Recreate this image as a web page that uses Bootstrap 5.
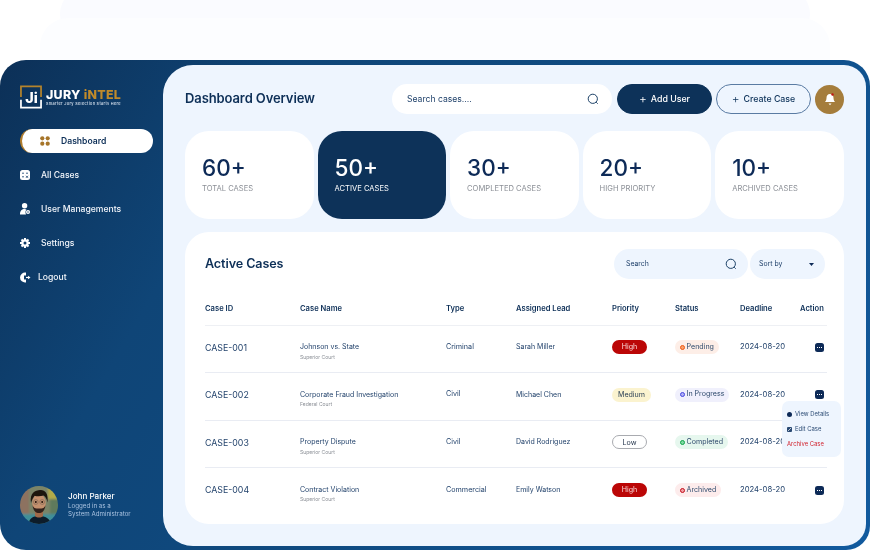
<!DOCTYPE html>
<html lang="en">
<head>
<meta charset="utf-8">
<title>Jury Intel Dashboard</title>
<link href="https://cdn.jsdelivr.net/npm/bootstrap@5.3.0/dist/css/bootstrap.min.css" rel="stylesheet">
<style>
html,body{margin:0;width:870px;height:550px;overflow:hidden;background:#fff}
body{font-family:Inter,"Liberation Sans",sans-serif;color:#0d2f57;position:relative}
.ghost-a,.ghost-b{position:absolute}
.ghost-a{left:60px;right:60px;top:-12px;height:52px;border-radius:30px;background:#fafbff}
.ghost-b{left:40px;right:40px;top:18px;height:42px;border-radius:28px 28px 0 0;background:#fcfdff}
.stage{position:relative;padding-top:60px;height:550px;will-change:transform}
.frame{height:490px;border-radius:26px 26px 24px 26px;background:linear-gradient(120deg,#0c3057 0,#0f4577 25%,#0f4a80 50%,#115a9e 100%);padding:5px 4px 4px 0}
.rail{width:163px;padding:20px 10px 22px 20px}
.panel{background:#eef5fe;border-radius:30px 22px 22px 30px;padding:19px 22px 22px 22px;min-width:0}
.logo-t{font-weight:800;font-size:12.4px;line-height:13px;letter-spacing:.3px;color:#fff;white-space:nowrap}
.logo-t span{color:#c08a2a}
.logo-s{font-size:3.8px;line-height:5px;color:#dfe8f3;letter-spacing:.35px;white-space:nowrap;font-weight:500}
.navrail{margin-top:20px;gap:10px}
.navrail .nav-link{height:24px;padding:0;display:flex;align-items:center;color:#f3f6fb;font-size:8.6px;font-weight:500}
.navrail .nav-link svg{flex:none}
.navrail .nav-link.on{background:#fff;color:#0d2f57;border-radius:12px;border-left:2px solid #b07d2e;padding-left:18px;gap:11px;font-weight:600}
.navrail .nav-link.it{padding-left:0;gap:7px}
.who{margin-top:auto;gap:10px}
.who-t{margin-bottom:2px}
.who-n{font-size:8.1px;font-weight:500;color:#fff;line-height:12px}
.who-r{font-size:6.2px;line-height:8.5px;color:#a9c2e0}
.page-h{font-size:13px;font-weight:600;color:#0d2f57;margin:0;letter-spacing:-.1px}
.topbar{height:30px;margin-bottom:17px}
.sbox{width:220px;height:30px;margin-left:auto;margin-right:5px;background:#fff;border-radius:15px;padding:0 13px 0 15px;font-size:8.6px;color:#22436c}
.cta{width:95px;height:30px;border-radius:15px;font-size:8.8px;padding:0;font-weight:500;display:flex;align-items:center;justify-content:center;gap:4px}
.cta span{font-size:12px;font-weight:300;line-height:1}
.cta-a{background:#0d3259;color:#fff;border:1px solid #0d3259;margin-right:4px}
.cta-b{background:transparent;color:#0d3259;border:1px solid #5a7ba3;margin-right:4px}
.belly{width:29px;height:29px;border-radius:50%;background:#a57d3c;flex:none}
.stats{display:grid;grid-template-columns:repeat(5,1fr);gap:3.7px;margin-bottom:13px}
.stat{height:88px;border-radius:24px;background:#fff;padding:24px 17px 0}
.stat b{display:block;font-weight:500;font-size:22.5px;line-height:26px;color:#0d2a57}
.stat i{display:block;font-style:normal;font-size:7.6px;line-height:10px;margin-top:3px;color:#8b8f96}
.stat.dark{background:#0d3259}
.stat.dark b,.stat.dark i{color:#fff}
.board{height:292px;background:#fff;border-radius:24px;padding:20px 17px 0 20px;position:relative}
.board .page-h{font-size:12.6px}
.mini{height:30px;border-radius:15px;background:#eef5fe;font-size:6.9px;color:#22436c;display:flex;align-items:center;justify-content:space-between}
.mini-s{width:134px;margin-left:auto;margin-right:2px;padding:0 11px 0 12px}
.mini-d{width:75px;padding:0 11px 0 9px;margin-right:2px}
.bh-row{height:30px;margin-top:-3px}
.grid-t{table-layout:fixed;width:622px;margin:0;border-collapse:collapse}
.grid-t>*>tr>*{padding:0;background:transparent;color:#0d2f57;vertical-align:middle;box-shadow:none}
.grid-t>thead>tr>th{height:38px;padding-top:6px;font-size:7.6px;font-weight:600;border-bottom:1px solid #eef0f4}
.grid-t>tbody>tr>td{height:47.5px;padding-bottom:3px;font-size:7.2px;color:#23436c;border-bottom:1px solid #e9ecf3}
.grid-t>tbody>tr:last-child>td{border-bottom:0}
.grid-t>tbody>tr>td.nmc{padding-top:8px;font-size:7px}
.grid-t>tbody>tr>td.ld{font-size:7px}
.c1{width:95px}.c2{width:146px}.c3{width:70px}.c4{width:96px}.c5{width:63px}.c6{width:65px}.c7{width:60px}.c8{width:27px}
.grid-t>tbody>tr>td.cid{font-size:8.8px}
.sub{display:block;font-size:5px;line-height:7px;color:#8b8f96;margin-top:1.5px}
.nm{display:block;line-height:10px;margin-top:0}
.prio{display:inline-block;height:14px;line-height:13px;border-radius:7px;text-align:center;font-size:7.1px;width:35px}
.p-h{background:#bb0606;color:#fbdada}
.p-m{background:#fbf3cf;color:#2a3f55;width:39px}
.p-l{background:#fff;border:1px solid #a9abb0;color:#26364d}
.stt{display:inline-flex;align-items:center;gap:1.5px;height:14px;border-radius:7px;padding:0 5px;font-size:7.1px;color:#2e4a6c}
.stt u{display:block;width:5px;height:5px;border-radius:50%;text-decoration:none;border:1.6px solid}
.s-p{background:#fdeee7}.s-p u{border-color:#f05a10;background:#f7a070}
.s-i{background:#f0f0fc}.s-i u{border-color:#4545e0;background:#b0b0f5}
.s-c{background:#e6f7ee}.s-c u{border-color:#0ea54a;background:#7ed8a0}
.s-a{background:#fdecec}.s-a u{border-color:#c40d1a;background:#f0a0a5}
.grid-t>tbody>tr>td.dl{font-size:7.7px}
.dots{display:block;width:9px;height:9px;margin-left:15px;border-radius:2.5px;background:#0d2a57;position:relative}
.dots::after{content:"";position:absolute;left:2px;top:4px;width:1px;height:1px;background:#fff;box-shadow:2px 0 #fff,4px 0 #fff}
.drop{position:absolute;left:597px;top:169px;width:59px;height:56px;border-radius:7px;background:#eef5fe;padding:6px 0 0 5px;font-size:5.9px;color:#2a4a73;z-index:2}
.drop div{height:15px;display:flex;align-items:center;gap:3px}
.drop .red{color:#d11f2a}
</style>
</head>
<body>
<div class="ghost-a"></div><div class="ghost-b"></div>
<div class="stage">
<div class="frame d-flex">
  <aside class="rail d-flex flex-column flex-shrink-0">
    <div class="d-flex align-items-center gap-1">
      <svg width="22" height="24" viewBox="0 0 23 24" aria-hidden="true">
        <path d="M1 12V1h21v11" fill="none" stroke="#b5842c" stroke-width="1.8"/>
        <path d="M1 15v8h21v-8" fill="none" stroke="#fff" stroke-width="1.8"/>
        <text x="5.500" y="18" font-family="Inter,sans-serif" font-size="15" font-weight="800" fill="#fff">Ji</text>
      </svg>
      <div>
        <div class="logo-t">JURY <span>iNTEL</span></div>
        <div class="logo-s">Smarter Jury Selection Starts Here</div>
      </div>
    </div>
    <nav class="nav flex-column navrail">
      <a class="nav-link on" href="#"><svg width="10" height="10" viewBox="0 0 10 10" fill="#a6752a"><circle cx="2.300" cy="2.300" r="2.100"/><circle cx="7.700" cy="2.300" r="2.100"/><circle cx="2.300" cy="7.700" r="2.100"/><circle cx="7.700" cy="7.700" r="2.100"/></svg>Dashboard</a>
      <a class="nav-link it" href="#"><svg width="10" height="10" viewBox="0 0 10 10"><rect width="10" height="10" rx="2.500" fill="#fff"/><path d="M2 3.200h2M6 3.200h2M2 6.800h2M6 5.800l2 2M8 5.800l-2 2" stroke="#0e3a68" stroke-width=".8"/></svg><span class="ms-1">All Cases</span></a>
      <a class="nav-link it" href="#"><svg width="10" height="12" viewBox="0 0 10 12" fill="#fff"><circle cx="4.600" cy="2.800" r="2.700"/><path d="M0 11.500c0-4 2-5.500 4.500-5.500 1 0 1.500.2 2 .5C5.500 7.500 5 9.500 6 11.500z"/><circle cx="8" cy="9" r="2"/><circle cx="8" cy="9" r=".7" fill="#0e3a68"/></svg><span class="ms-1">User Managements</span></a>
      <a class="nav-link it" href="#"><svg width="10" height="10" viewBox="0 0 10 10"><circle cx="5" cy="5" r="3.700" fill="#fff"/><g stroke="#fff" stroke-width="2"><path d="M5 0v10M0 5h10M1.500 1.500l7 7M8.500 1.500l-7 7"/></g><circle cx="5" cy="5" r="1.500" fill="#0e3a68"/></svg><span class="ms-1">Settings</span></a>
      <a class="nav-link it" href="#"><svg width="11" height="11" viewBox="0 0 11 11" fill="#fff"><path d="M6 .6A5 5 0 1 0 6 10.400V7.500H4V3.500h2z"/><path d="M8 3.700l2.500 1.800L8 7.300z"/><path d="M6 4.900h2.500v1.200H6z"/></svg><span class="ms-0">Logout</span></a>
    </nav>
    <div class="who d-flex align-items-center">
      <svg width="38" height="38" viewBox="0 0 38 38" class="flex-shrink-0" aria-hidden="true">
        <defs>
          <clipPath id="av"><circle cx="19" cy="19" r="19"/></clipPath>
          <filter id="sf" x="-10%" y="-10%" width="120%" height="120%"><feGaussianBlur stdDeviation="1.100"/></filter>
          <filter id="sg" x="-10%" y="-10%" width="120%" height="120%"><feGaussianBlur stdDeviation=".45"/></filter>
        </defs>
        <g clip-path="url(#av)">
          <g filter="url(#sf)">
            <rect x="-3" y="-3" width="44" height="44" fill="#7a8468"/>
            <rect x="-3" y="-3" width="12" height="44" fill="#8d7260"/>
            <rect x="28" y="-3" width="13" height="16" fill="#b3ab4a"/>
            <rect x="30" y="13" width="11" height="15" fill="#5f7a5c"/>
            <rect x="-3" y="28" width="44" height="13" fill="#3f8f98"/>
          </g>
          <g filter="url(#sg)">
            <path d="M8 40c1-8 5-10 11-10s11 2 13 10z" fill="#0f1a2a"/>
            <path d="M15 24h8v6c-2 2-6 2-8 0z" fill="#a26b49"/>
            <ellipse cx="19" cy="17" rx="6.800" ry="9" fill="#c4916e"/>
            <path d="M12.500 19c.6 6 3.500 8 6.500 8s5.900-2 6.500-8c-1 3-2.500 3.500-6.500 3.500s-5.500-.5-6.500-3.500z" fill="#33211a"/>
            <path d="M11 17C9.500 7 15 4 20.500 4c5 0 8 4 7 12.500-.8-4-2-6-4-7-3 1-6.500 1-9 .2-1 1.500-2.500 3.300-3.500 7.300z" fill="#1b1310"/>
            <circle cx="15.800" cy="16" r="1" fill="#21140e"/><circle cx="22.200" cy="16" r="1" fill="#21140e"/>
          </g>
          <g fill="none" stroke="#6b5a50" stroke-width=".5"><circle cx="15.800" cy="16" r="2.400"/><circle cx="22.200" cy="16" r="2.400"/></g>
        </g>
      </svg>
      <div class="who-t">
        <div class="who-n">John Parker</div>
        <div class="who-r">Logged in as a<br>System Administrator</div>
      </div>
    </div>
  </aside>
  <main class="panel flex-grow-1">
    <header class="topbar d-flex align-items-center">
      <h1 class="page-h">Dashboard Overview</h1>
      <div class="sbox d-flex align-items-center justify-content-between"><span>Search cases....</span>
        <svg width="12" height="12" viewBox="0 0 12 12" fill="none" stroke="#1d4268" stroke-width="1"><circle cx="5.800" cy="5.800" r="4.600"/><path d="M9.200 9.200l1.500 1.500"/></svg></div>
      <button class="btn cta cta-a" type="button"><span>+</span> Add User</button>
      <button class="btn cta cta-b" type="button"><span>+</span> Create Case</button>
      <div class="belly d-flex align-items-center justify-content-center">
        <svg width="12" height="13" viewBox="0 0 12 13"><path d="M6 1c2.500 0 3.500 2 3.500 4 0 2 .8 3 1.500 4H1c.7-1 1.500-2 1.500-4C2.500 3 3.500 1 6 1z" fill="#fff"/><path d="M4.500 10.500h3L6 12.300z" fill="#fff"/><circle cx="8.500" cy="1.500" r="1.200" fill="#c21414"/></svg>
      </div>
    </header>
    <section class="stats">
      <div class="stat"><b>60+</b><i>TOTAL CASES</i></div>
      <div class="stat dark"><b>50+</b><i>ACTIVE CASES</i></div>
      <div class="stat"><b>30+</b><i>COMPLETED CASES</i></div>
      <div class="stat"><b>20+</b><i>HIGH PRIORITY</i></div>
      <div class="stat"><b>10+</b><i>ARCHIVED CASES</i></div>
    </section>
    <section class="board">
      <div class="d-flex align-items-center bh-row">
        <h2 class="page-h">Active Cases</h2>
        <div class="mini mini-s"><span>Search</span><svg width="12" height="12" viewBox="0 0 12 12" fill="none" stroke="#1d4268" stroke-width="1"><circle cx="5.800" cy="5.800" r="4.600"/><path d="M9.200 9.200l1.500 1.500"/></svg></div>
        <div class="mini mini-d"><span>Sort by</span><svg width="5" height="3" viewBox="0 0 5 3" fill="#0d2a57"><path d="M0 0h5L2.500 3z"/></svg></div>
      </div>
      <table class="table grid-t mt-2">
        <colgroup><col class="c1"><col class="c2"><col class="c3"><col class="c4"><col class="c5"><col class="c6"><col class="c7"><col class="c8"></colgroup>
        <thead><tr><th>Case ID</th><th>Case Name</th><th>Type</th><th>Assigned Lead</th><th>Priority</th><th>Status</th><th>Deadline</th><th>Action</th></tr></thead>
        <tbody>
          <tr><td class="cid">CASE-001</td><td class="nmc"><span class="nm">Johnson vs. State</span><span class="sub">Superior Court</span></td><td>Criminal</td><td class="ld">Sarah Miller</td><td><span class="prio p-h">High</span></td><td><span class="stt s-p"><u></u>Pending</span></td><td class="dl">2024-08-20</td><td><span class="dots"></span></td></tr>
          <tr><td class="cid">CASE-002</td><td class="nmc"><span class="nm">Corporate Fraud Investigation</span><span class="sub">Federal Court</span></td><td>Civil</td><td class="ld">Michael Chen</td><td><span class="prio p-m">Medium</span></td><td><span class="stt s-i"><u></u>In Progress</span></td><td class="dl">2024-08-20</td><td><span class="dots"></span></td></tr>
          <tr><td class="cid">CASE-003</td><td class="nmc"><span class="nm">Property Dispute</span><span class="sub">Superior Court</span></td><td>Civil</td><td class="ld">David Rodriguez</td><td><span class="prio p-l">Low</span></td><td><span class="stt s-c"><u></u>Completed</span></td><td class="dl">2024-08-20</td><td></td></tr>
          <tr><td class="cid">CASE-004</td><td class="nmc"><span class="nm">Contract Violation</span><span class="sub">Superior Court</span></td><td>Commercial</td><td class="ld">Emily Watson</td><td><span class="prio p-h">High</span></td><td><span class="stt s-a"><u></u>Archived</span></td><td class="dl">2024-08-20</td><td><span class="dots"></span></td></tr>
        </tbody>
      </table>
      <div class="drop">
        <div><svg width="5" height="5" viewBox="0 0 5 5"><circle cx="2.500" cy="2.500" r="2.500" fill="#0d2a57"/></svg><span>View Details</span></div>
        <div><svg width="5" height="5" viewBox="0 0 5 5"><rect width="5" height="5" rx="1" fill="#2a4a73"/><path d="M1 4l3-3" stroke="#fff" stroke-width=".7"/></svg><span>Edit Case</span></div>
        <div class="red">Archive Case</div>
      </div>
    </section>
  </main>
</div>
</div>
<script src="https://cdn.jsdelivr.net/npm/bootstrap@5.3.0/dist/js/bootstrap.bundle.min.js"></script>
</body>
</html>
